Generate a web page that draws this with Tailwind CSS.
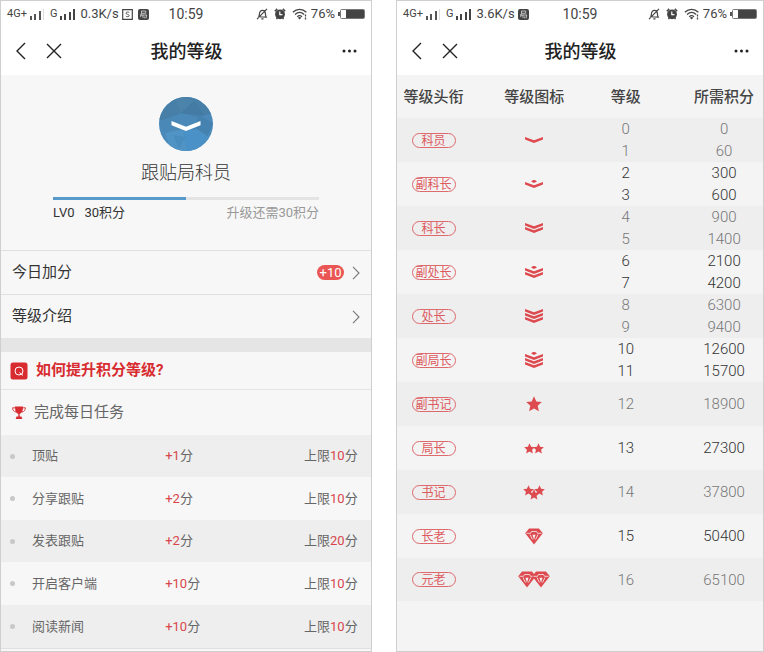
<!DOCTYPE html>
<html lang="zh-CN">
<head>
    <meta charset="UTF-8">
    <meta name="viewport" content="width=device-width, initial-scale=1.0">
    <title>我的等级</title>
    <script src="https://cdn.jsdelivr.net/npm/@tailwindcss/browser@4"></script>
</head>
<body class="bg-white font-['Roboto','Noto_Sans_CJK_SC',sans-serif] text-[#333333]">
    <!-- Shared icons -->
    <svg class="hidden">
        <symbol id="signal" viewBox="0 0 16 11">
            <path d="M0 7h2v4H0zM4 5h2v6H4zM9 2h2v9H9z" fill="#555"/>
            <path d="M13 0h1v11h-1z" fill="#ddd"/>
        </symbol>
        <symbol id="signal-full" viewBox="0 0 16 11">
            <path d="M0 7h2v4H0zM4 5h2v6H4zM9 3h2v8H9zM13 0h2v11h-2z" fill="#444"/>
        </symbol>
        <symbol id="app-box" viewBox="0 0 11 11">
            <path d="M.7.7h9.600v9.600H.7z" fill="none" stroke="#444" stroke-width="1.200"/>
            <path d="M7.300 3.700C6.500 2.700 4 2.800 4 4.200c0 1.500 3.200.9 3.200 2.400 0 1.400-2.600 1.400-3.400.4" fill="none" stroke="#555"/>
        </symbol>
        <symbol id="app-solid" viewBox="0 0 11 11">
            <rect width="11" height="11" rx="2" fill="#444"/>
            <path d="M3.500 2h4.200v2.300H3.500zM2 6h6.800M3.500 4.300 2.600 8M5 6v3M8.700 6 8 9.300M6.700 7.500v1.800" fill="none" stroke="#ddd" stroke-width=".8"/>
        </symbol>
        <symbol id="bell-off" viewBox="0 0 12 12">
            <path d="M2.800 8.800c.7-1 .3-4 1.500-5.400C5.600 2 8 2.200 8.900 3.600c.8 1.500.3 4 1.300 5.400zM5.300 10.800h2.200M1 11.200 11 .8" fill="none" stroke="#444" stroke-width="1.200"/>
        </symbol>
        <symbol id="alarm" viewBox="0 0 12 12">
            <circle cx="6" cy="6.300" r="4.900" fill="#444"/>
            <path d="M.8 3.200 3.200.9M11.200 3.200 8.800.9M2.500 11l1-1.500M9.500 11l-1-1.500" stroke="#444" stroke-width="1.500"/>
            <path d="M5.800 3.500v3.200h2.600" fill="none" stroke="#fff" stroke-width="1.200"/>
        </symbol>
        <symbol id="wifi" viewBox="0 0 16 12">
            <path d="M.8 4.200c4-3.900 9.600-3.900 13.600 0M3 6.500c2.800-2.600 6.400-2.600 9.200 0M5.200 8.700c1.500-1.300 3.300-1.300 4.800 0" fill="none" stroke="#444" stroke-width="1.200"/>
            <path d="m5.900 9.700 1.700 1.800 1.700-1.800c-1-.8-2.400-.8-3.400 0z" fill="#444"/>
            <path d="M13.500 6.500v2M13.500 9.500v2" stroke="#444" stroke-width="1.300"/>
        </symbol>
        <symbol id="battery" viewBox="0 0 27 12">
            <path d="M0 4h2v4H0z" fill="#555"/>
            <rect x="2.500" y="1.500" width="24" height="9" rx="1" fill="#fff" stroke="#777"/>
            <path d="M8 2h18v8H8z" fill="#444"/>
        </symbol>
        <symbol id="back" viewBox="0 0 10 18">
            <path d="M9 1 1 9l8 8" fill="none" stroke="#222" stroke-width="1.400"/>
        </symbol>
        <symbol id="close" viewBox="0 0 16 16">
            <path d="m1 1 14 14M15 1 1 15" fill="none" stroke="#222" stroke-width="1.400"/>
        </symbol>
        <symbol id="more" viewBox="0 0 16 4">
            <circle cx="3" cy="2" r="1.500" fill="#222"/>
            <circle cx="8.500" cy="2" r="1.500" fill="#222"/>
            <circle cx="14" cy="2" r="1.500" fill="#222"/>
        </symbol>
        <symbol id="arrow" viewBox="0 0 8 14">
            <path d="m1 .8 6 6.200-6 6.200" fill="none" stroke="#777" stroke-width="1.100"/>
        </symbol>
        <symbol id="bar" viewBox="0 0 18 6">
            <path d="M0 0v2.400l9 3.600 9-3.600V0L9 3.300z" fill="#dd4a4f"/>
        </symbol>
        <symbol id="half" viewBox="0 0 6 3">
            <path d="M0 1.500 2 0h2l2 1.500L3 3z" fill="#dd4a4f"/>
        </symbol>
        <symbol id="star" viewBox="0 0 16 16">
            <path d="m8 .3 2.300 5.100 5.500.6-4.100 3.700 1.200 5.500L8 12.400l-4.900 2.800 1.200-5.500L.2 6l5.500-.6z" fill="#dd4a4f"/>
        </symbol>
        <symbol id="gem" viewBox="0 0 18 17">
            <path d="M4 .5h10l3.800 4.700L9 16.500.2 5.200z" fill="#dd4a4f"/>
            <path d="M1.500 5.300h4M12.500 5.300h4M5.500 5.300 6.500 3.500h5l1 1.800M5 6.500l2.500 5M13 6.500l-2.500 5" fill="none" stroke="#f4f4f4" stroke-width=".8"/>
            <path d="M7.500 6.800h3L9 11.800z" fill="#f4f4f4"/>
        </symbol>
    </svg>

    <div class="grid grid-cols-[372fr_368fr] gap-6 min-h-screen">
        <!-- My level -->
        <section class="border border-[#cfcfcf] bg-[#f7f7f7]">
            <header class="bg-white h-[74px]">
                <div class="flex items-center h-[26px] px-1.5 text-[#444444]">
                    <div class="flex flex-1 items-center">
                        <span class="text-[11px]">4G+</span>
                        <svg class="w-4 h-[11px] ml-[3px]"><use href="#signal"/></svg>
                        <span class="text-[11px] ml-1">G</span>
                        <svg class="w-4 h-[11px] ml-[3px]"><use href="#signal-full"/></svg>
                        <span class="text-[13px] ml-1">0.3K/s</span>
                        <svg class="w-[11px] h-[11px] ml-[3px]"><use href="#app-box"/></svg>
                        <svg class="w-[11px] h-[11px] ml-[5px]"><use href="#app-solid"/></svg>
                    </div>
                    <span class="text-sm">10:59</span>
                    <div class="flex flex-1 items-center justify-end">
                        <svg class="w-3 h-3"><use href="#bell-off"/></svg>
                        <svg class="w-3 h-3 ml-1.5"><use href="#alarm"/></svg>
                        <svg class="w-4 h-3 ml-1.5"><use href="#wifi"/></svg>
                        <span class="text-[13px] ml-[3px]">76%</span>
                        <svg class="w-[27px] h-3 ml-[3px]"><use href="#battery"/></svg>
                    </div>
                </div>
                <div class="flex items-center h-12 pl-[15px] pr-3.5">
                    <div class="flex flex-1 items-center gap-5">
                        <button type="button" aria-label="返回"><svg class="w-2.5 h-[18px]"><use href="#back"/></svg></button>
                        <button type="button" aria-label="关闭"><svg class="w-4 h-4"><use href="#close"/></svg></button>
                    </div>
                    <h1 class="text-[18px] font-medium text-[#222222]">我的等级</h1>
                    <div class="flex flex-1 justify-end">
                        <button type="button" aria-label="更多"><svg class="w-4 h-1"><use href="#more"/></svg></button>
                    </div>
                </div>
            </header>

            <div class="h-[175px] pt-[22px] px-[52px]">
                <svg class="w-[54px] h-[54px] mx-auto" viewBox="0 0 54 54">
                    <clipPath id="round"><circle cx="27" cy="27" r="27"/></clipPath>
                    <g clip-path="url(#round)">
                        <path d="M0 0h54v54H0z" fill="#4a89b8"/>
                        <path d="M0 0h54v16l-14 4L22 16 6 26 0 22z" fill="#477fa8"/>
                        <path d="m17 3 8-3 10 4-13 12z" fill="#4b83ab"/>
                        <path d="m35 4 10 14-23-2z" fill="#427ba4"/>
                        <path d="M0 24 18 18l6 16-18 2z" fill="#4a88b7"/>
                        <path d="m40 18 14 8-6 14-14-8z" fill="#4682b0"/>
                        <path d="m6 36 18-4 4 22H12z" fill="#4f94c5"/>
                        <path d="m24 34 14-2 12 8-12 14H28z" fill="#4a91c7"/>
                        <path d="m14 38 12 2-6 12z" fill="#498dbf"/>
                    </g>
                    <path d="M12.500 24v4.300L27 34l14.500-5.700V24L27 29.700z" fill="#fff"/>
                </svg>
                <p class="mt-2.5 text-center text-[18px] leading-6 font-light">跟贴局科员</p>
                <div role="progressbar" aria-valuenow="50" aria-valuemin="0" aria-valuemax="100" aria-label="升级进度" class="mt-3 h-[3px] bg-[#e4e4e4]">
                    <div class="h-full bg-[#5799ca]" style="width: 50%"></div>
                </div>
                <div class="flex justify-between mt-[3px] text-[13px] leading-5">
                    <p>LV0<span class="ml-2.5">30积分</span></p>
                    <p class="text-[#999999]">升级还需30积分</p>
                </div>
            </div>

            <nav class="text-[15px]">
                <a href="#today" class="flex items-center h-11 px-[11px] border-t border-[#e0e0e0]">
                    今日加分
                    <span class="ml-auto mr-2 w-[27px] h-[15px] rounded-full bg-[#ea5654] text-center text-[13px] leading-[15px] text-white">+10</span>
                    <svg class="w-2 h-3.5"><use href="#arrow"/></svg>
                </a>
                <a href="#levels" class="flex items-center h-11 px-[11px] border-t border-[#e0e0e0]">
                    等级介绍
                    <svg class="w-2 h-3.5 ml-auto"><use href="#arrow"/></svg>
                </a>
            </nav>

            <div class="h-3.5 bg-[#e5e5e5]"></div>

            <h2 class="flex items-center h-[37px] pl-[9px] text-[15px] font-bold text-[#d82c30]">
                <svg class="w-[18px] h-[18px] mr-2" viewBox="0 0 18 18">
                    <rect x=".5" y=".5" width="17" height="17" rx="2.500" fill="#d82c30"/>
                    <circle cx="9" cy="9" r="4" fill="none" stroke="#fff"/>
                    <path d="m9.500 10.500 3.500 3" stroke="#fff"/>
                </svg>
                如何提升积分等级?
            </h2>
            <h3 class="flex items-center h-[46px] pl-[11px] border-t border-[#e4e4e4] text-[15px] text-[#666666]">
                <svg class="w-3.5 h-3.5 mr-2" viewBox="0 0 14 14">
                    <path d="M3 .5h8c0 4-.8 6.700-3.300 7.300v2.700h1.800l.8 2.500H3.700l.8-2.500h1.800V7.800C3.800 7.200 3 4.500 3 .5z" fill="#d82c30"/>
                    <path d="M3 1.800H.6C.8 4.500 2 5.700 4 6M11 1.800h2.400C13.200 4.500 12 5.700 10 6" fill="none" stroke="#d82c30" stroke-width=".9"/>
                </svg>
                完成每日任务
            </h3>

            <table class="w-full table-fixed text-left text-[13px] text-[#666666]">
                <colgroup>
                    <col class="w-[31px]">
                    <col class="w-[36%]">
                    <col>
                    <col class="w-[67px]">
                </colgroup>
                <tbody>
                    <tr class="h-[42px] bg-[#eeeeee]">
                        <td><span class="block size-[5px] ml-[9px] rounded-full bg-[#c8c8c8]"></span></td>
                        <td>顶贴</td>
                        <td><span class="text-[#d8464b]">+1</span>分</td>
                        <td>上限<span class="text-[#d8464b]">10</span>分</td>
                    </tr>
                    <tr class="h-[43px]">
                        <td><span class="block size-[5px] ml-[9px] rounded-full bg-[#c8c8c8]"></span></td>
                        <td>分享跟贴</td>
                        <td><span class="text-[#d8464b]">+2</span>分</td>
                        <td>上限<span class="text-[#d8464b]">10</span>分</td>
                    </tr>
                    <tr class="h-[42px] bg-[#eeeeee]">
                        <td><span class="block size-[5px] ml-[9px] rounded-full bg-[#c8c8c8]"></span></td>
                        <td>发表跟贴</td>
                        <td><span class="text-[#d8464b]">+2</span>分</td>
                        <td>上限<span class="text-[#d8464b]">20</span>分</td>
                    </tr>
                    <tr class="h-[43px]">
                        <td><span class="block size-[5px] ml-[9px] rounded-full bg-[#c8c8c8]"></span></td>
                        <td>开启客户端</td>
                        <td><span class="text-[#d8464b]">+10</span>分</td>
                        <td>上限<span class="text-[#d8464b]">10</span>分</td>
                    </tr>
                    <tr class="h-[43px] bg-[#eeeeee] border-b border-[#e0e0e0]">
                        <td><span class="block size-[5px] ml-[9px] rounded-full bg-[#c8c8c8]"></span></td>
                        <td>阅读新闻</td>
                        <td><span class="text-[#d8464b]">+10</span>分</td>
                        <td>上限<span class="text-[#d8464b]">10</span>分</td>
                    </tr>
                </tbody>
            </table>
        </section>

        <!-- Level table -->
        <section class="border border-[#cfcfcf] bg-[#f4f4f4]">
            <header class="bg-white h-[74px]">
                <div class="flex items-center h-[26px] px-1.5 text-[#444444]">
                    <div class="flex flex-1 items-center">
                        <span class="text-[11px]">4G+</span>
                        <svg class="w-4 h-[11px] ml-[3px]"><use href="#signal"/></svg>
                        <span class="text-[11px] ml-1">G</span>
                        <svg class="w-4 h-[11px] ml-[3px]"><use href="#signal-full"/></svg>
                        <span class="text-[13px] ml-1">3.6K/s</span>
                        <svg class="w-[11px] h-[11px] ml-[3px]"><use href="#app-solid"/></svg>
                    </div>
                    <span class="text-sm">10:59</span>
                    <div class="flex flex-1 items-center justify-end">
                        <svg class="w-3 h-3"><use href="#bell-off"/></svg>
                        <svg class="w-3 h-3 ml-1.5"><use href="#alarm"/></svg>
                        <svg class="w-4 h-3 ml-1.5"><use href="#wifi"/></svg>
                        <span class="text-[13px] ml-[3px]">76%</span>
                        <svg class="w-[27px] h-3 ml-[3px]"><use href="#battery"/></svg>
                    </div>
                </div>
                <div class="flex items-center h-12 pl-[15px] pr-3.5">
                    <div class="flex flex-1 items-center gap-5">
                        <button type="button" aria-label="返回"><svg class="w-2.5 h-[18px]"><use href="#back"/></svg></button>
                        <button type="button" aria-label="关闭"><svg class="w-4 h-4"><use href="#close"/></svg></button>
                    </div>
                    <h1 class="text-[18px] font-medium text-[#222222]">我的等级</h1>
                    <div class="flex flex-1 justify-end">
                        <button type="button" aria-label="更多"><svg class="w-4 h-1"><use href="#more"/></svg></button>
                    </div>
                </div>
            </header>

            <table class="w-full table-fixed text-center text-[15px] leading-[22px] font-light">
                <thead>
                    <tr class="h-[43px] text-[#444444]">
                        <th class="w-[20%] font-medium">等级头衔</th>
                        <th class="w-[35%] font-medium">等级图标</th>
                        <th class="w-[15%] font-medium">等级</th>
                        <th class="pl-8 font-medium">所需积分</th>
                    </tr>
                </thead>
                <tbody class="bg-[#eeeeee] text-[#777777]">
                    <tr class="h-[22px]">
                        <td rowspan="2"><span class="block w-11 h-[15px] mx-auto rounded-full border border-[#dd6a6d] text-xs leading-[15px] font-normal text-[#dd5a5e]">科员</span></td>
                        <td rowspan="2"><svg class="w-[18px] h-1.5 mx-auto"><use href="#bar"/></svg></td>
                        <td>0</td>
                        <td class="pl-8">0</td>
                    </tr>
                    <tr class="h-[22px]"><td>1</td><td class="pl-8">60</td></tr>
                </tbody>
                <tbody class="text-[#333333]">
                    <tr class="h-[22px]">
                        <td rowspan="2"><span class="block w-11 h-[15px] mx-auto rounded-full border border-[#dd6a6d] text-xs leading-[15px] font-normal text-[#dd5a5e]">副科长</span></td>
                        <td rowspan="2">
                            <svg class="w-[18px] h-2 mx-auto"><use href="#half" x="6" width="6" height="3"/><use href="#bar" y="2" width="18" height="6"/></svg>
                        </td>
                        <td>2</td>
                        <td class="pl-8">300</td>
                    </tr>
                    <tr class="h-[22px]"><td>3</td><td class="pl-8">600</td></tr>
                </tbody>
                <tbody class="bg-[#eeeeee] text-[#777777]">
                    <tr class="h-[22px]">
                        <td rowspan="2"><span class="block w-11 h-[15px] mx-auto rounded-full border border-[#dd6a6d] text-xs leading-[15px] font-normal text-[#dd5a5e]">科长</span></td>
                        <td rowspan="2">
                            <svg class="w-[18px] h-2.5 mx-auto"><use href="#bar" width="18" height="6"/><use href="#bar" y="4" width="18" height="6"/></svg>
                        </td>
                        <td>4</td>
                        <td class="pl-8">900</td>
                    </tr>
                    <tr class="h-[22px]"><td>5</td><td class="pl-8">1400</td></tr>
                </tbody>
                <tbody class="text-[#333333]">
                    <tr class="h-[22px]">
                        <td rowspan="2"><span class="block w-11 h-[15px] mx-auto rounded-full border border-[#dd6a6d] text-xs leading-[15px] font-normal text-[#dd5a5e]">副处长</span></td>
                        <td rowspan="2">
                            <svg class="w-[18px] h-3 mx-auto"><use href="#half" x="6" width="6" height="3"/><use href="#bar" y="2" width="18" height="6"/><use href="#bar" y="6" width="18" height="6"/></svg>
                        </td>
                        <td>6</td>
                        <td class="pl-8">2100</td>
                    </tr>
                    <tr class="h-[22px]"><td>7</td><td class="pl-8">4200</td></tr>
                </tbody>
                <tbody class="bg-[#eeeeee] text-[#777777]">
                    <tr class="h-[22px]">
                        <td rowspan="2"><span class="block w-11 h-[15px] mx-auto rounded-full border border-[#dd6a6d] text-xs leading-[15px] font-normal text-[#dd5a5e]">处长</span></td>
                        <td rowspan="2">
                            <svg class="w-[18px] h-3.5 mx-auto"><use href="#bar" width="18" height="6"/><use href="#bar" y="4" width="18" height="6"/><use href="#bar" y="8" width="18" height="6"/></svg>
                        </td>
                        <td>8</td>
                        <td class="pl-8">6300</td>
                    </tr>
                    <tr class="h-[22px]"><td>9</td><td class="pl-8">9400</td></tr>
                </tbody>
                <tbody class="text-[#333333]">
                    <tr class="h-[22px]">
                        <td rowspan="2"><span class="block w-11 h-[15px] mx-auto rounded-full border border-[#dd6a6d] text-xs leading-[15px] font-normal text-[#dd5a5e]">副局长</span></td>
                        <td rowspan="2">
                            <svg class="w-[18px] h-4 mx-auto"><use href="#half" x="6" width="6" height="3"/><use href="#bar" y="2" width="18" height="6"/><use href="#bar" y="6" width="18" height="6"/><use href="#bar" y="10" width="18" height="6"/></svg>
                        </td>
                        <td>10</td>
                        <td class="pl-8">12600</td>
                    </tr>
                    <tr class="h-[22px]"><td>11</td><td class="pl-8">15700</td></tr>
                </tbody>
                <tbody>
                    <tr class="h-11 bg-[#eeeeee] text-[#777777]">
                        <td><span class="block w-11 h-[15px] mx-auto rounded-full border border-[#dd6a6d] text-xs leading-[15px] font-normal text-[#dd5a5e]">副书记</span></td>
                        <td><svg class="w-4 h-4 mx-auto"><use href="#star"/></svg></td>
                        <td>12</td>
                        <td class="pl-8">18900</td>
                    </tr>
                    <tr class="h-11 text-[#333333]">
                        <td><span class="block w-11 h-[15px] mx-auto rounded-full border border-[#dd6a6d] text-xs leading-[15px] font-normal text-[#dd5a5e]">局长</span></td>
                        <td>
                            <svg class="w-5 h-[11px] mx-auto"><use href="#star" width="11" height="11"/><use href="#star" x="9" width="11" height="11"/></svg>
                        </td>
                        <td>13</td>
                        <td class="pl-8">27300</td>
                    </tr>
                    <tr class="h-11 bg-[#eeeeee] text-[#777777]">
                        <td><span class="block w-11 h-[15px] mx-auto rounded-full border border-[#dd6a6d] text-xs leading-[15px] font-normal text-[#dd5a5e]">书记</span></td>
                        <td>
                            <svg class="w-[22px] h-[15px] mx-auto"><use href="#star" width="11" height="11"/><use href="#star" x="11" width="11" height="11"/><use href="#star" x="5.500" y="4" width="11" height="11"/></svg>
                        </td>
                        <td>14</td>
                        <td class="pl-8">37800</td>
                    </tr>
                    <tr class="h-11 text-[#333333]">
                        <td><span class="block w-11 h-[15px] mx-auto rounded-full border border-[#dd6a6d] text-xs leading-[15px] font-normal text-[#dd5a5e]">长老</span></td>
                        <td><svg class="w-[18px] h-[17px] mx-auto"><use href="#gem"/></svg></td>
                        <td>15</td>
                        <td class="pl-8">50400</td>
                    </tr>
                    <tr class="h-[43px] bg-[#eeeeee] text-[#777777]">
                        <td><span class="block w-11 h-[15px] mx-auto rounded-full border border-[#dd6a6d] text-xs leading-[15px] font-normal text-[#dd5a5e]">元老</span></td>
                        <td>
                            <svg class="w-8 h-[17px] mx-auto"><use href="#gem" width="18" height="17"/><use href="#gem" x="14" width="18" height="17"/></svg>
                        </td>
                        <td>16</td>
                        <td class="pl-8">65100</td>
                    </tr>
                </tbody>
            </table>
        </section>
    </div>
</body>
</html>
